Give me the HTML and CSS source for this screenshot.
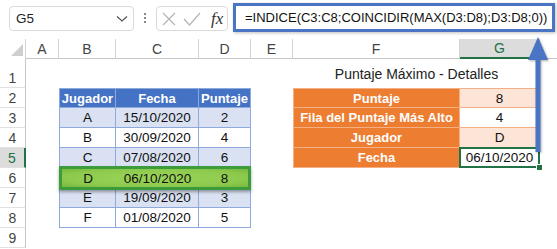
FILE: index.html
```html
<!DOCTYPE html>
<html>
  <head>
    <meta charset="utf-8">
    <title>Puntaje Máximo</title>
    <link rel="stylesheet" href="styles.css">
  </head>
  <body>

    <div id="bar">
      <div class="namebox">
        <span>G5</span>
        <svg width="12" height="8" viewBox="0 0 12 8"><path d="M1 1.5 L6 6 L11 1.5" fill="none" stroke="#555" stroke-width="1.2"/></svg>
      </div>
      <div class="dots"><i></i><i></i><i></i></div>
      <div class="fxbox">
        <svg width="16" height="16" viewBox="0 0 16 16"><path d="M2 2 L14 14 M14 2 L2 14" stroke="#b4b4b4" stroke-width="1.2"/></svg>
        <svg width="18" height="16" viewBox="0 0 18 16"><path d="M1 8 L6.5 14 L17 2" fill="none" stroke="#b4b4b4" stroke-width="1.2"/></svg>
        <span class="fx">fx</span>
      </div>
      <div class="formula">=INDICE(C3:C8;COINCIDIR(MAX(D3:D8);D3:D8;0))</div>
    </div>

    <div id="sheet">
      <div class="row head">
        <div class="corner"><svg width="12" height="12" viewBox="0 0 12 12"><path d="M12 0 L12 12 L0 12 Z" fill="#cfcfcf"/></svg></div>
        <div class="ch">A</div>
        <div class="ch">B</div>
        <div class="ch">C</div>
        <div class="ch">D</div>
        <div class="ch">E</div>
        <div class="ch">F</div>
        <div class="ch on">G</div>
        <div class="ch last"></div>
      </div>

      <div class="row tall">
        <div class="rh">1</div>
        <div></div><div></div><div></div><div></div><div></div>
        <div class="title">Puntaje Máximo - Detalles</div>
      </div>

      <div class="row">
        <div class="rh">2</div>
        <div></div>
        <div class="bh first">Jugador</div>
        <div class="bh">Fecha</div>
        <div class="bh">Puntaje</div>
        <div></div>
        <div class="oh top">Puntaje</div>
        <div class="ov top shade">8</div>
      </div>

      <div class="row">
        <div class="rh">3</div>
        <div></div>
        <div class="bc first shade">A</div>
        <div class="bc shade">15/10/2020</div>
        <div class="bc shade">2</div>
        <div></div>
        <div class="oh">Fila del Puntaje Más Alto</div>
        <div class="ov">4</div>
      </div>

      <div class="row">
        <div class="rh">4</div>
        <div></div>
        <div class="bc first">B</div>
        <div class="bc">30/09/2020</div>
        <div class="bc">4</div>
        <div></div>
        <div class="oh">Jugador</div>
        <div class="ov shade">D</div>
      </div>

      <div class="row">
        <div class="rh on">5</div>
        <div></div>
        <div class="bc first shade">C</div>
        <div class="bc shade">07/08/2020</div>
        <div class="bc shade">6</div>
        <div></div>
        <div class="oh">Fecha</div>
        <div class="ov sel">06/10/2020</div>
      </div>

      <div class="row">
        <div class="rh">6</div>
        <div></div>
        <div class="best">
          <div>D</div>
          <div>06/10/2020</div>
          <div>8</div>
        </div>
      </div>

      <div class="row">
        <div class="rh">7</div>
        <div></div>
        <div class="bc first shade">E</div>
        <div class="bc shade">19/09/2020</div>
        <div class="bc shade">3</div>
      </div>

      <div class="row">
        <div class="rh">8</div>
        <div></div>
        <div class="bc first">F</div>
        <div class="bc">01/08/2020</div>
        <div class="bc">5</div>
      </div>

      <div class="row">
        <div class="rh">9</div>
      </div>
    </div>

    <!-- arrow pointing from the result up to the formula -->
    <svg class="arrow" width="24" height="120" viewBox="0 0 24 120">
      <path d="M12 1 L22 24 L14.5 24 L14.5 116 L9.5 116 L9.5 24 L2 24 Z" fill="#4a74c4"/>
    </svg>

  </body>
</html>
```

FILE: styles.css
```css
body{
  margin: 0;
  width: 557px;
  height: 249px;
  overflow: hidden;
  background: #fff;
  font-family: "Liberation Sans", Arial, sans-serif;
  color: #111;
  position: relative;
}

/* formula bar */
#bar{
  height: 39px;
  display: flex;
  align-items: flex-start;
  padding-left: 9px;
}

.namebox{
  margin-top: 6px;
  width: 125px;
  height: 25px;
  box-sizing: border-box;
  border: 1px solid #dadada;
  border-radius: 4px;
  display: flex;
  align-items: center;
  justify-content: space-between;
  padding: 0 5px 0 6px;
  font-size: 13.5px;
  color: #222;
}

.dots{
  width: 22px;
  height: 39px;
  display: flex;
  flex-direction: column;
  align-items: center;
  justify-content: center;
  gap: 2px;
  padding-bottom: 3px;
  box-sizing: border-box;
}

.dots i{
  width: 2px;
  height: 2px;
  background: #8a8a8a;
}

.fxbox{
  margin-top: 6px;
  width: 72px;
  height: 25px;
  box-sizing: border-box;
  border: 1px solid #dadada;
  border-radius: 4px;
  display: flex;
  align-items: center;
  gap: 6px;
  padding-left: 4px;
}

.fx{
  font-family: "Liberation Serif", serif;
  font-style: italic;
  font-size: 17px;
  color: #333;
  margin-left: 4px;
}

.formula{
  margin: 3px 0 0 5px;
  width: 322px;
  height: 29px;
  box-sizing: border-box;
  border: 3px solid #4a74c4;
  box-shadow: 1px 1px 3px rgba(0,0,0,0.25);
  padding-left: 9px;
  font-size: 13px;
  line-height: 23px;
  color: #111;
  white-space: nowrap;
}

/* grid */
.row{
  display: grid;
  grid-template-columns: 26px 33px 57px 83px 52px 42px 167px 80px 1fr;
  grid-template-rows: 20px;
  height: 20px;
  font-size: 13.5px;
}

.row > div{
  box-sizing: border-box;
  display: flex;
  align-items: center;
  justify-content: center;
}

.row.tall{
  grid-template-rows: 29px;
  height: 29px;
}

.corner{
  border-right: 1px solid #d4d4d4;
  justify-content: flex-end !important;
  align-items: flex-end !important;
  padding: 0 2px 3px 0;
}

.ch{
  border-right: 1px solid #d4d4d4;
  border-bottom: 1px solid #c6c6c6;
  color: #444;
  font-size: 14px;
}

.ch.last{
  border-right: none;
}

.ch.on{
  background: #dcdcdc;
  border-bottom: 2px solid #217346;
  color: #217346;
}

.rh{
  border-right: 1px solid #c6c6c6;
  border-bottom: 1px solid #e1e1e1;
  color: #444;
  font-size: 14px;
}

.tall .rh{
  align-items: flex-end !important;
  padding-bottom: 1px;
}

.rh.on{
  background: #dcdcdc;
  border-right: 2px solid #217346;
  color: #217346;
}

.title{
  grid-column: span 2;
  font-size: 14px;
  color: #222;
}

/* blue table */
.bh{
  background: #4472c4;
  color: #fff;
  font-weight: bold;
  font-size: 13px;
  border-right: 1px solid #8eaadb;
  border-bottom: 1px solid #8eaadb;
  border-top: 1px solid #8eaadb;
}

.bc{
  border-right: 1px solid #8eaadb;
  border-bottom: 1px solid #8eaadb;
}

.first{
  border-left: 1px solid #8eaadb;
}

.bc.shade{
  background: #d9e1f2;
}

.best{
  grid-column: span 3;
  display: grid !important;
  grid-template-columns: 57px 82px 52px;
  margin: -2px 0 -2px 0;
  border: 3px solid #3a9c3a;
  background: radial-gradient(ellipse at center, #9bd55a 0%, #8cc94c 70%, #78b83e 100%);
  box-shadow: 0 2px 3px rgba(0,0,0,0.35);
  position: relative;
  z-index: 1;
}

.best > div{
  display: flex;
  align-items: center;
  justify-content: center;
}

/* orange table */
.oh{
  background: #ed7d31;
  color: #fff;
  font-weight: bold;
  font-size: 13px;
  border-left: 1px solid #f4b084;
  border-right: 1px solid #f4b084;
  border-bottom: 1px solid #f4b084;
  white-space: nowrap;
}

.ov{
  border-right: 1px solid #f4b084;
  border-bottom: 1px solid #f4b084;
}

.top{
  border-top: 1px solid #f4b084;
}

.ov.shade{
  background: #fce4d6;
}

.sel{
  position: relative;
}

.sel::after{
  content: "";
  position: absolute;
  left: -1px;
  top: -1px;
  right: -1px;
  bottom: -1px;
  border: 2px solid #217346;
}

.sel::before{
  content: "";
  position: absolute;
  right: -4px;
  bottom: -4px;
  width: 5px;
  height: 5px;
  background: #217346;
  border: 1px solid #fff;
  z-index: 2;
}

.arrow{
  position: absolute;
  left: 526px;
  top: 36px;
  filter: drop-shadow(1px 1px 1px rgba(0,0,0,0.3));
}
```
